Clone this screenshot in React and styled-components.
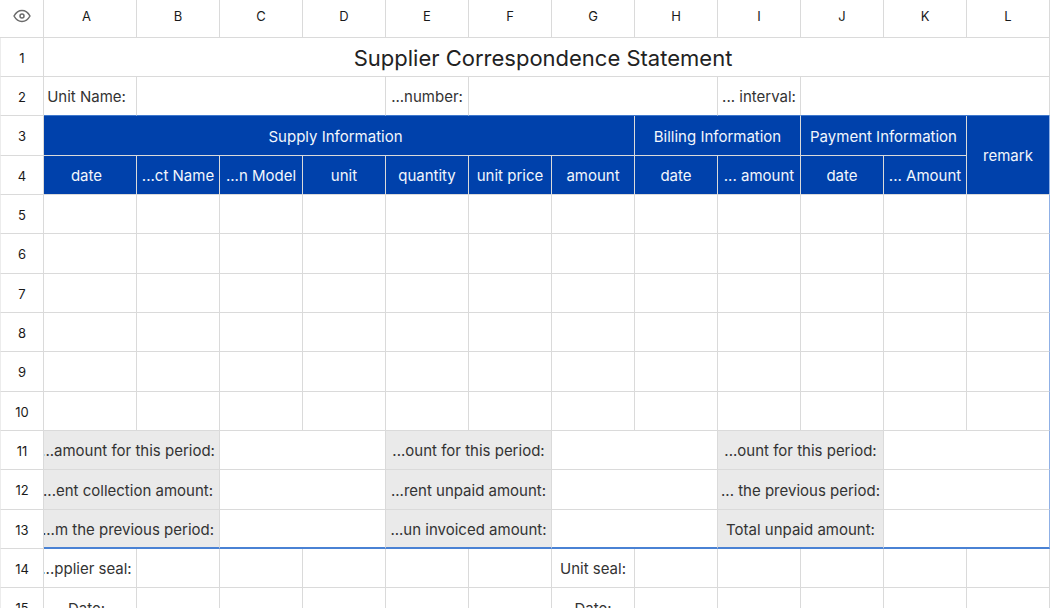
import React from "react";
import styled, { createGlobalStyle } from "styled-components";

const columns = ["A", "B", "C", "D", "E", "F", "G", "H", "I", "J", "K", "L"];

// n empty cells in a row
const blank = (n) => Array.from({ length: n }, () => ({}));

const head = (text, span = 1, rows = 1) => ({ text, span, rows, kind: "head" });
const label = (text) => ({ text, span: 2, kind: "label" });

const rows = [
    [{ text: "Supplier Correspondence Statement", span: 12, kind: "title" }],
    [
        { text: "Unit Name:" },
        { span: 3 },
        { text: "...number:" },
        { span: 3 },
        { text: "... interval:" },
        { span: 3 },
    ],
    [
        head("Supply Information", 7),
        head("Billing Information", 2),
        head("Payment Information", 2),
        head("remark", 1, 2),
    ],
    [
        head("date"),
        head("...ct Name"),
        head("...n Model"),
        head("unit"),
        head("quantity"),
        head("unit price"),
        head("amount"),
        head("date"),
        head("... amount"),
        head("date"),
        head("... Amount"),
    ],
    blank(12),
    blank(12),
    blank(12),
    blank(12),
    blank(12),
    blank(12),
    [
        label("...amount for this period:"),
        { span: 2 },
        label("...ount for this period:"),
        { span: 2 },
        label("...ount for this period:"),
        { span: 2 },
    ],
    [
        label("...ent collection amount:"),
        { span: 2 },
        label("...rent unpaid amount:"),
        { span: 2 },
        label("... the previous period:"),
        { span: 2 },
    ],
    [
        label("...m the previous period:"),
        { span: 2 },
        label("...un invoiced amount:"),
        { span: 2 },
        label("Total unpaid amount:"),
        { span: 2 },
    ],
    [{ text: "...pplier seal:" }, ...blank(5), { text: "Unit seal:" }, ...blank(5)],
    [{ text: "Date:" }, ...blank(5), { text: "Date:" }, ...blank(5)],
];

// the statement form lies in rows 3 to 13 and has a blue outline
const FORM_START = 2;
const FORM_END = 12;

const EyeIcon = () => (
    <svg width="18" height="14" viewBox="0 0 18 14" fill="none" stroke="#6b6b6b">
        <path
            d="M1 7C3 3.400 5.700 1.500 9 1.500S15 3.400 17 7c-2 3.600-4.700 5.500-8 5.500S3 10.600 1 7z"
            strokeWidth="1.5"
            strokeLinejoin="round"
        />
        <circle cx="9" cy="7" r="2" strokeWidth="1.5" />
    </svg>
);

const App = () => {
    return (
        <Sheet>
            <GlobalStyle />
            <Grid>
                <colgroup>
                    <NumberCol />
                    <FirstCol />
                    {columns.slice(1).map((name) => (
                        <col key={name} />
                    ))}
                </colgroup>
                <thead>
                    <tr>
                        <Corner>
                            <EyeButton type="button" aria-label="Show hidden cells">
                                <EyeIcon />
                            </EyeButton>
                        </Corner>
                        {columns.map((name, i) => (
                            <ColumnName key={name} scope="col" $first={i === 0}>
                                {name}
                            </ColumnName>
                        ))}
                    </tr>
                </thead>
                <tbody>
                    {rows.map((cells, r) => (
                        <Row key={r}>
                            <RowNumber scope="row">{r + 1}</RowNumber>
                            {cells.map((cell, c) => {
                                const inForm = r >= FORM_START && r <= FORM_END;
                                const last = c === cells.length - 1 && r !== 3;
                                return (
                                    <Cell
                                        key={c}
                                        colSpan={cell.span}
                                        rowSpan={cell.rows}
                                        $kind={cell.kind}
                                        $first={c === 0}
                                        $blueRight={inForm && last}
                                        $blueTop={r === FORM_START - 1}
                                        $blueBottom={r === FORM_END}
                                    >
                                        {cell.text && <CellText>{cell.text}</CellText>}
                                    </Cell>
                                );
                            })}
                        </Row>
                    ))}
                </tbody>
            </Grid>
        </Sheet>
    );
};

const GlobalStyle = createGlobalStyle`
    body {
        margin: 0;
        background: #ffffff;
    }
`;

const Sheet = styled.main`
    height: 100vh;
    overflow: hidden;
    font-family: Inter, "Liberation Sans", sans-serif;
`;

const Grid = styled.table`
    width: 100%;
    table-layout: fixed;
    border-collapse: separate;
    border-spacing: 0;
`;

const NumberCol = styled.col`
    width: 44px;
`;

const FirstCol = styled.col`
    width: 93px;
`;

const Row = styled.tr`
    height: 39px;

    &:nth-child(3n) {
        height: 40px;
    }
`;

const HeaderCell = styled.th`
    box-sizing: border-box;
    padding: 0;
    border-right: 1px solid #dadada;
    border-bottom: 1px solid #dadada;
    color: #1a1a1a;
    font-size: 13px;
    font-weight: 400;
    line-height: 16px;
    text-align: center;
    vertical-align: middle;
`;

const Corner = styled(HeaderCell)`
    height: 38px;
    padding-bottom: 5px;
`;

const ColumnName = styled(HeaderCell)`
    padding: 0 ${(props) => (props.$first ? 7 : 0)}px 5px 0;
`;

const RowNumber = styled(HeaderCell)`
    padding-top: 1px;
    border-left: 1px solid #ececec;
`;

const EyeButton = styled.button`
    display: flex;
    margin: 0 auto;
    padding: 0;
    border: none;
    background: transparent;
    cursor: pointer;
`;

const backgrounds = {
    head: "#0041ab",
    label: "#eaeaea",
};

const bottomBorder = ({ $blueTop, $blueBottom }) => {
    if ($blueBottom) return "2px solid #4a82d4";
    return $blueTop ? "1px solid #3f78cc" : "1px solid #dadada";
};

const textColor = ({ $kind }) => {
    if ($kind === "head") return "#f2f6fc";
    return $kind === "title" ? "#222222" : "#333333";
};

const Cell = styled.td`
    box-sizing: border-box;
    padding: 2px ${(props) => (props.$first ? 7 : 0)}px 0 0;
    overflow: hidden;
    border-right: 1px solid ${(props) => (props.$blueRight ? "#8fb0e6" : "#dadada")};
    border-bottom: ${bottomBorder};
    background: ${(props) => backgrounds[props.$kind] || "#ffffff"};
    color: ${textColor};
    font-size: ${(props) => (props.$kind === "title" ? 22 : 15)}px;
    line-height: ${(props) => (props.$kind === "title" ? 30 : 20)}px;
    vertical-align: middle;
    white-space: nowrap;
`;

/* text wider than its cell runs out evenly on both sides */
const CellText = styled.div`
    display: flex;
    justify-content: center;
`;

export default App;
